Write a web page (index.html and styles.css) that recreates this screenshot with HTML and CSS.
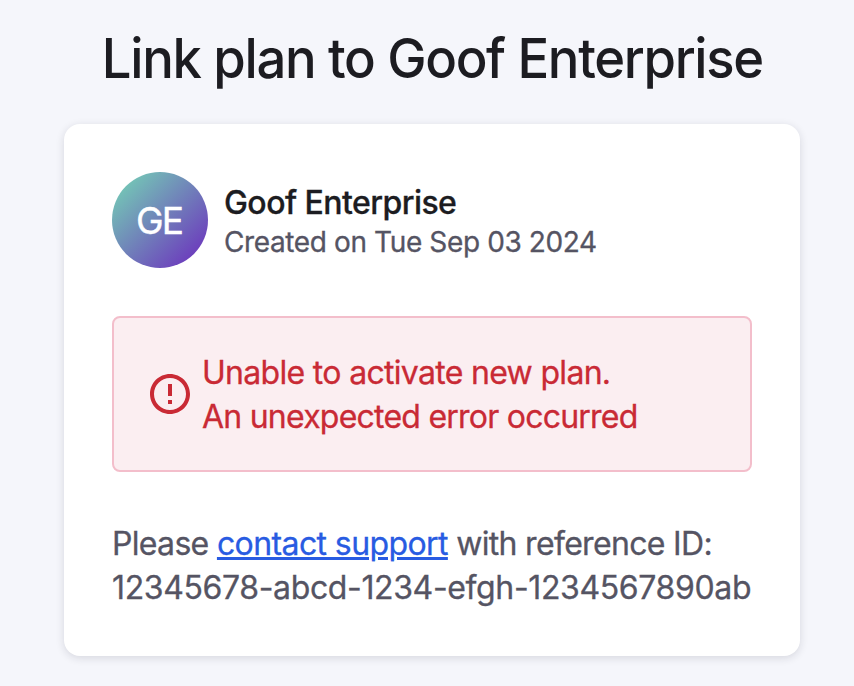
FILE: index.html
```html
<!DOCTYPE html>
<html lang="en">
<head>
<meta charset="utf-8">
<title>Link plan</title>
<link rel="stylesheet" href="styles.css">
</head>
<body>
<main class="page">
  <h1 class="title"><span class="title-text">Link plan to Goof Enterprise</span></h1>
  <section class="card">
    <header class="org">
      <div class="avatar">GE</div>
      <div class="org-info">
        <div class="org-name">Goof Enterprise</div>
        <div class="org-date">Created on Tue Sep 03 2024</div>
      </div>
    </header>
    <div class="alert" role="alert">
      <svg class="alert-icon" viewBox="0 0 24 24" aria-hidden="true"><path d="M11 15h2v2h-2zm0-8h2v6h-2zm.99-5C6.47 2 2 6.48 2 12s4.47 10 9.99 10C17.52 22 22 17.52 22 12S17.52 2 11.99 2zM12 20c-4.42 0-8-3.58-8-8s3.58-8 8-8 8 3.58 8 8-3.58 8-8 8z"/></svg>
      <div class="alert-text"><div class="alert-main">Unable to activate new plan.</div><div class="alert-detail">An unexpected error occurred</div></div>
    </div>
    <div class="help"><div class="help-line">Please <a class="link" href="#">contact support</a> with reference ID:</div><div class="reference">12345678-abcd-1234-efgh-1234567890ab</div></div>
  </section>
</main>
</body>
</html>
```

FILE: styles.css
```css
* { box-sizing: border-box; }
body {
  margin: 0;
  background: #f5f6fb;
  color: #1c1c21;
  font-family: Inter, "Liberation Sans", sans-serif;
  -webkit-font-smoothing: antialiased;
}
.page {
  height: 686px;
  padding: 26px 54px 0 64px;
  overflow: hidden;
}
.title {
  width: 736px;
  margin: 0 0 34px;
  font-size: 55px;
  font-weight: 500;
  line-height: 64px;
  letter-spacing: -1.4px;
  text-align: center;
  white-space: nowrap;
}
.title-text { display: inline-block; margin: 0 -30px; transform: scaleX(.957); }
.card {
  width: 736px;
  height: 532px;
  padding: 48px;
  border-radius: 16px;
  background: #fff;
  box-shadow: 0 2px 8px rgba(30, 30, 50, .14);
}
.org { display: flex; align-items: center; gap: 16px; }
.avatar {
  width: 96px;
  height: 96px;
  border-radius: 50%;
  background: linear-gradient(135deg, #74c8b6 10%, #6c35bd 92%);
  color: #fff;
  font-size: 37px;
  font-weight: 400;
  -webkit-text-stroke: .4px currentColor;
  line-height: 97px;
  letter-spacing: -2px;
  text-indent: -2px;
  text-align: center;
}
.org-info { padding-top: 5px; white-space: nowrap; }
.org-name { font-size: 32px; line-height: 40px; font-weight: 500; letter-spacing: -.55px; -webkit-text-stroke: .3px currentColor; }
.org-date { font-size: 28px; line-height: 39px; letter-spacing: -.38px; color: #555463; }
.org-date, .alert-text, .help { font-weight: 400; -webkit-text-stroke: .3px currentColor; }
.alert {
  display: flex;
  align-items: center;
  gap: 8px;
  height: 156px;
  margin-top: 48px;
  padding: 0 30px 0 32px;
  border: 2px solid #f3becb;
  border-radius: 8px;
  background: #fbeef1;
  color: #c92a35;
}
.alert-icon { width: 48px; height: 48px; fill: currentColor; }
.alert-text, .help { font-size: 32px; line-height: 44px; white-space: nowrap; }
.alert-text { padding-top: 2px; }
.alert-main { letter-spacing: -.69px; }
.alert-detail { letter-spacing: -.77px; }
.help { margin-top: 50px; color: #555463; letter-spacing: -.68px; }
.reference { letter-spacing: -.37px; }
.link { color: #285be2; letter-spacing: -.6px; text-decoration-thickness: 3px; text-underline-offset: 2px; }
```
